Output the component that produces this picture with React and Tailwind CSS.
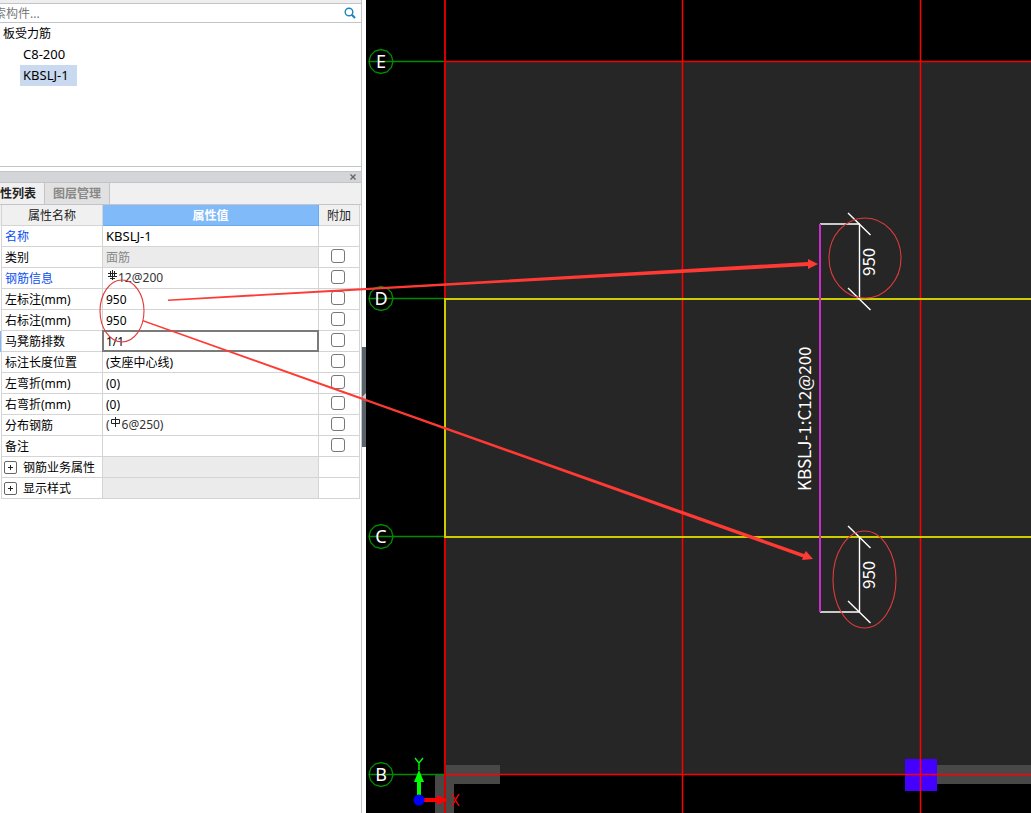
import React, { useState } from 'react';

const components = ['C8-200', 'KBSLJ-1'];

const properties = [
  { name: '名称', value: 'KBSLJ-1', key: true, large: true },
  { name: '类别', value: '面筋', readOnly: true, check: true },
  { name: '钢筋信息', value: '12@200', key: true, rebar: 'C', check: true },
  { name: '左标注(mm)', value: '950', check: true },
  { name: '右标注(mm)', value: '950', check: true },
  { name: '马凳筋排数', value: '1/1', editing: true, check: true },
  { name: '标注长度位置', value: '(支座中心线)', check: true },
  { name: '左弯折(mm)', value: '(0)', check: true },
  { name: '右弯折(mm)', value: '(0)', check: true },
  { name: '分布钢筋', value: '6@250)', prefix: '(', rebar: 'A', check: true },
  { name: '备注', value: '', check: true },
  { name: '钢筋业务属性', group: true },
  { name: '显示样式', group: true },
];

const axes = [
  { label: 'E', y: 62 },
  { label: 'D', y: 299 },
  { label: 'C', y: 537 },
  { label: 'B', y: 775 },
];

const RebarSymbol = ({ grade }) => (
  <svg className="mt-px mr-px inline-block align-top" width="11" height="11" viewBox="0 0 11 11" fill="none" stroke="#222">
    {grade === 'C' ? (
      <path d="M6.500 0V10M4.500 1V7M8.500 1V7M2 3.500H11M2 6.500H11M4 8.500H9" />
    ) : (
      <path d="M5.500 0V10M1.500 2.500H9.500V6.500H1.500Z" />
    )}
  </svg>
);

const SearchBar = () => (
  <div className="flex h-5 items-center border-y border-[#c3c4c9] bg-white overflow-hidden">
    <input
      type="text"
      aria-label="搜索构件"
      placeholder="搜索构件..."
      className="-ml-[18px] flex-1 min-w-0 pt-0.5 leading-4 outline-none placeholder:text-[#777]"
    />
    <button aria-label="搜索" className="mr-[5px] shrink-0">
      <svg width="12" height="12" viewBox="0 0 12 12" fill="none" stroke="#1c84c0">
        <circle cx="5" cy="5" r="3.800" strokeWidth="1.400" />
        <path d="M7.800 7.800L11 11" strokeWidth="2.200" />
      </svg>
    </button>
  </div>
);

const ComponentTree = () => {
  const [selected, setSelected] = useState('KBSLJ-1');

  return (
    <div className="h-36 border-b border-[#c3c4c9] bg-white leading-[21px] text-black">
      <div className="pl-[3px]">板受力筋</div>
      <ul className="pl-5 text-[13px]">
        {components.map((item) => (
          <li key={item} className="flex">
            <button
              onClick={() => setSelected(item)}
              className={item === selected ? 'bg-[#c9daf0] pl-[3px] pr-2' : 'pl-[3px] pr-2'}
            >
              {item}
            </button>
          </li>
        ))}
      </ul>
    </div>
  );
};

const valueClass = (item) => {
  if (item.group || item.readOnly) return 'border-r border-b border-[#d4d4d4] bg-[#ebebeb] pt-0.5 pl-[3px] text-[#888]';
  if (item.editing) return 'border-r border-b border-[#d4d4d4] text-black';
  if (item.rebar) return 'border-r border-b border-[#d4d4d4] pl-[3px] text-[#333]';
  if (item.large) return 'border-r border-b border-[#d4d4d4] pl-[3px] text-[13px] text-black';
  return 'border-r border-b border-[#d4d4d4] pt-0.5 pl-[3px] text-black';
};

const PropertyRow = ({ item }) => (
  <tr className="h-[21px]">
    <td className={item.editing ? 'border-r border-[#d4d4d4] bg-[#7fb9f9]' : 'border-r border-[#d4d4d4]'}></td>
    <th
      scope="row"
      className={
        item.key
          ? 'border-r border-b border-[#d4d4d4] pt-0.5 pl-[3px] text-left font-normal text-[#0a50ee]'
          : 'border-r border-b border-[#d4d4d4] pt-0.5 pl-[3px] text-left font-normal text-black'
      }
    >
      {item.group ? (
        <div className="flex items-center gap-1.5 -ml-px">
          <button aria-label="展开" className="mb-0.5">
            <svg className="block" width="13" height="13" viewBox="0 0 13 13" fill="none">
              <rect x="0.5" y="0.5" width="12" height="12" rx="1.5" stroke="#666" />
              <path d="M4 6.5H9M6.5 4V9" stroke="#222" />
            </svg>
          </button>
          {item.name}
        </div>
      ) : (
        item.name
      )}
    </th>
    <td className={valueClass(item)}>
      {item.editing ? (
        <input
          type="text"
          aria-label={item.name}
          defaultValue={item.value}
          className="block h-5 w-full pl-[3px] outline-2 -outline-offset-1 outline-[#7a7a7a]"
        />
      ) : (
        <>
          {item.prefix}
          {item.rebar && <RebarSymbol grade={item.rebar} />}
          {item.value}
        </>
      )}
    </td>
    <td className="border-r border-b border-[#d4d4d4] pr-0.5">
      {item.check && (
        <input
          type="checkbox"
          aria-label={`附加 ${item.name}`}
          className="mx-auto -mt-0.5 block h-3.5 w-3.5 appearance-none rounded-[3px] border border-[#777] bg-white checked:bg-[#7fb9f9]"
        />
      )}
    </td>
  </tr>
);

const PropertyPanel = () => (
  <section className="mt-1 flex-1 border-t border-[#c3c4c9] bg-white">
    <div className="flex h-[11px] items-center justify-end border-b border-[#c3c4c9] bg-[#d4d5d9]">
      <button aria-label="关闭" className="mr-[5px]">
        <svg className="block" width="6" height="6" viewBox="0 0 6 6" stroke="#666" strokeWidth="1.400">
          <path d="M0.5 0.5L5.5 5.5M5.5 0.5L0.5 5.5" />
        </svg>
      </button>
    </div>
    <div className="flex h-[22px] overflow-hidden border-b border-[#c3c4c9] bg-[#f0f0f0]">
      <button className="-ml-3 shrink-0 pr-2 font-bold text-[#222]">属性列表</button>
      <button className="shrink-0 border-x border-[#c3c4c9] bg-[#e1e1e1] px-2 font-bold text-[#888]">图层管理</button>
    </div>
    <table className="w-[360px] table-fixed border-separate border-spacing-0 leading-[18px]">
      <colgroup>
        <col className="w-0.5" />
        <col className="w-[101px]" />
        <col className="w-[216px]" />
        <col className="w-[41px]" />
      </colgroup>
      <thead>
        <tr className="h-[21px] bg-[#f0f0f0] text-[#222]">
          <td className="border-r border-[#d4d4d4]"></td>
          <th className="border-r border-b border-[#d4d4d4] pt-0.5 font-normal">属性名称</th>
          <th className="border-r border-b border-[#6aaaf2] bg-[#80baf9] pt-0.5 font-bold text-white">属性值</th>
          <th className="border-r border-b border-[#d4d4d4] pt-0.5 font-normal">附加</th>
        </tr>
      </thead>
      <tbody>
        {properties.map((item) => (
          <PropertyRow key={item.name} item={item} />
        ))}
      </tbody>
    </table>
  </section>
);

const Dimension = ({ y1, y2, shelf }) => (
  <g stroke="#fff" strokeWidth="1.400" fill="none">
    <path d={`M454 ${shelf}H494M493.5 ${y1}V${y2}`} />
    <path d={`M482 ${y1 - 11}L504.500 ${y1 + 11}M482 ${y2 - 11}L504.500 ${y2 + 11}`} />
  </g>
);

const Drawing = () => (
  <svg className="absolute inset-0 h-full w-full" fontFamily="'Noto Sans', sans-serif">
    {/* slab */}
    <rect x="79" y="62" width="100%" height="713" fill="#262626" />
    {/* walls */}
    <rect x="79" y="765" width="55" height="19" fill="#484848" />
    <rect x="69" y="775" width="19" height="100%" fill="#484848" />
    <rect x="570" y="765" width="100%" height="19" fill="#484848" />
    <rect x="539" y="759" width="32" height="32" fill="#4400ff" />

    {/* axis grid */}
    {axes.map((axis) => (
      <g key={axis.label}>
        <path d={`M3 ${axis.y - 0.5}H79`} stroke="#008c00" strokeWidth="1.300" />
        <polygon
          points="12,0 10.4,6 6,10.4 0,12 -6,10.4 -10.4,6 -12,0 -10.4,-6 -6,-10.4 0,-12 6,-10.4 10.4,-6"
          transform={`translate(15 ${axis.y - 0.5})`}
          fill="none"
          stroke="#008c00"
          strokeWidth="1.300"
        />
        <text x="15" y={axis.y + 6} textAnchor="middle" fontSize="18" fill="#fff">
          {axis.label}
        </text>
      </g>
    ))}
    <line x1="79" y1="61.500" x2="100%" y2="61.500" stroke="#f00000" strokeWidth="1.400" />
    <line x1="79" y1="774.500" x2="100%" y2="774.500" stroke="#ff0000" strokeWidth="1.500" />
    <line x1="79" y1="0" x2="79" y2="100%" stroke="#d40000" strokeWidth="2" />
    <line x1="316.500" y1="0" x2="316.500" y2="100%" stroke="#ff0000" strokeWidth="1.500" />
    <line x1="554.500" y1="0" x2="554.500" y2="100%" stroke="#ff0000" strokeWidth="1.500" />

    {/* selected slab range */}
    <g stroke="#cccc00" strokeWidth="2">
      <line x1="79" y1="299" x2="100%" y2="299" />
      <line x1="79" y1="537" x2="100%" y2="537" />
      <line x1="79" y1="298" x2="79" y2="538" />
    </g>

    {/* rebar */}
    <Dimension y1={224} y2={299} shelf={224} />
    <Dimension y1={537} y2={612} shelf={612} />
    <path d="M454 224V612" stroke="#cc2ccc" strokeWidth="2" />
    <g fill="#fff" fontSize="17" fontFamily="'Noto Sans CJK SC', sans-serif">
      <text transform="translate(509 276) rotate(-90)">950</text>
      <text transform="translate(509 589) rotate(-90)">950</text>
      <text transform="translate(445 491) rotate(-90)">KBSLJ-1:C12@200</text>
    </g>

    {/* origin */}
    <path d="M53 798V780" stroke="#00ff00" strokeWidth="4" />
    <path d="M53 770L58 782H48Z" fill="#00ff00" />
    <path d="M49 758L53 763L57 758M53 763V770" stroke="#00ff00" strokeWidth="1.400" fill="none" />
    <path d="M56 800H72" stroke="#ff0000" strokeWidth="4" />
    <path d="M82 800L71 795V805Z" fill="#ff0000" />
    <path d="M86 794L93 806M93 794L86 806" stroke="#ff0000" strokeWidth="1.400" />
    <circle cx="53" cy="800" r="5.500" fill="#0000ff" />
  </svg>
);

const Markup = () => (
  <svg className="pointer-events-none absolute inset-0 h-full w-full">
    <g fill="none" stroke="#e23b3b" strokeWidth="1.100">
      <ellipse cx="122" cy="311" rx="22" ry="31" />
      <ellipse cx="865" cy="258" rx="36" ry="40" />
      <ellipse cx="864.500" cy="579.500" rx="31.500" ry="48.500" />
    </g>
    <g fill="#ff3a35">
      <path d="M168 299.500L808 262L808 259L818 264L808 269L808 266L168 301Z" />
      <path d="M143 320L804 554L806 551L813 559L802 560L803 557.500L143 321.500Z" />
    </g>
  </svg>
);

const App = () => {
  return (
    <div className="relative flex min-h-screen overflow-hidden bg-white text-xs font-['Noto_Sans','Noto_Sans_CJK_SC',sans-serif]">
      <aside className="flex w-[362px] shrink-0 flex-col border-r border-[#c3c4c9] bg-white">
        <div className="h-[3px] bg-[#eeeeee]"></div>
        <SearchBar />
        <ComponentTree />
        <PropertyPanel />
      </aside>
      <div className="flex w-1 shrink-0 flex-col bg-white pt-[347px]">
        <div className="flex h-[100px] items-center justify-center bg-[#59636b]">
          <svg width="4" height="8" viewBox="0 0 4 8" fill="#c5c9cc">
            <path d="M4 0V8L0 4Z" />
          </svg>
        </div>
      </div>
      <main className="relative min-w-0 flex-1 overflow-hidden bg-black">
        <Drawing />
      </main>
      <Markup />
    </div>
  );
};

export default App;
